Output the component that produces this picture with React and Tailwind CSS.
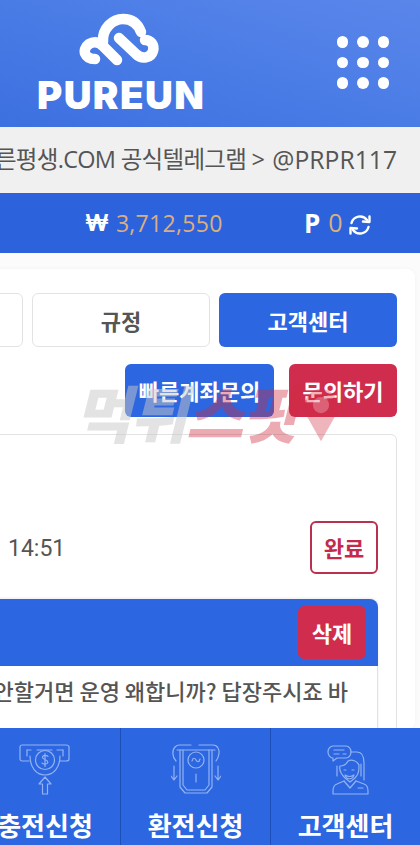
import React from 'react';

const kr = "font-['Noto_Sans_CJK_KR','Noto_Sans',sans-serif]";

const Logo = () => (
  <svg width="90" height="60" viewBox="80 10 90 60" fill="none" stroke="#fff" strokeWidth="10.5" strokeLinecap="round" strokeLinejoin="round" className="block">
    {/* left lobe */}
    <path d="M96 59 C86 59 82 50 90 44 C95 41 100 42 104 46 L118 60" />
    {/* top arc */}
    <path d="M104 42 C103 28 114 19 124 19 C133 19 139 24 142 32" />
    {/* inner strand with right lobe */}
    <path d="M120 38 L137 54 C143 60 152 58 154 51 C156 44 151 40 146 40" />
  </svg>
);

const RefreshIcon = () => (
  <svg width="24" height="24" viewBox="0 0 24 24" fill="none" stroke="#fff" strokeWidth="2.4" strokeLinecap="round" strokeLinejoin="round">
    <path d="M3.5 10 A8.8 8.8 0 0 1 19 7" />
    <path d="M20.5 14 A8.8 8.8 0 0 1 5 17" />
    <path d="M15 8.5 L21.5 9 L21.5 3.5" />
    <path d="M9 15.5 L2.5 15 L2.5 20.5" />
  </svg>
);

const ChargeIcon = () => (
  <svg width="52" height="52" viewBox="0 0 52 52" fill="none" stroke="#93b3f2" strokeWidth="1.2" strokeLinecap="round" strokeLinejoin="round">
    <path d="M10 17 H3 C2 17 1 16 1 15 V3 C1 2 2 1 3 1 H47 C49 1 50 2 50 3 V15 C50 16 49 17 47 17 H41" />
    <path d="M8 6 H12 M18 6 H33 M38 6 H44" />
    <path d="M8 6 V12 M44 6 V12" />
    <path d="M11 12 C11 23 17 31 26 31 C35 31 41 23 41 12" />
    <circle cx="26" cy="16" r="9.5" />
    <path d="M29 12.5 C28 11 24 11 23.5 13 C23 16 29 15 28.8 18.5 C28.5 20.5 24 20.5 23 19 M26 9.5 V22.5" />
    <path d="M26 33 L20 40 H23.5 V50 H28.5 V40 H32 Z" />
  </svg>
);

const ExchangeIcon = () => (
  <svg width="50" height="52" viewBox="0 0 50 52" fill="none" stroke="#93b3f2" strokeWidth="1.2" strokeLinecap="round" strokeLinejoin="round">
    <path d="M5 17 C1 13 1 6 4 3 C5 2 6 1 8 1 H20 M28 1 H42 C44 1 46 2 47 4 C49 7 48 13 45 17" />
    <path d="M6 6 H44" />
    <path d="M9 6 V43 L14 49 H36 L41 43 V6" />
    <path d="M12 6 V41 L16 46 H34 L38 41 V6" />
    <circle cx="25" cy="16" r="8" />
    <path d="M21 17 C22 13 24 14 25 16 C26 18 28 19 29 15" />
    <path d="M25 30 V38" />
    <path d="M3 22 V35 M0 32 L3 36 L6 32" />
    <path d="M47 22 V35 M44 32 L47 36 L50 32" />
  </svg>
);

const AgentIcon = () => (
  <svg width="50" height="52" viewBox="0 0 50 52" fill="none" stroke="#93b3f2" strokeWidth="1.2" strokeLinecap="round" strokeLinejoin="round">
    <path d="M12 2 H25 C28 2 30 5 30 8 C30 11 28 14 25 14 H16 L12 17 V14 C9 14 7 11 7 8 C7 5 9 2 12 2 Z" />
    <path d="M13 6 H23 M13 10 H18 M22 10 H25" />
    <path d="M27 17 C31 15 36 17 38 21 C38 26 38 30 34 34 L29 38 L24 34 C20 30 18 26 19 22 C22 22 25 21 27 17 Z" />
    <path d="M30 8 H36 C41 8 43 13 43 19 V36 M16 22 V32 M40 20 V32" />
    <path d="M23 26 H25 M31 26 H33" />
    <path d="M24 31 C27 33 30 33 33 31 C32 36 25 36 24 31 Z" />
    <path d="M23 37 L16 40 C13 41 12 44 12 47 V50 H47 V47 C47 44 46 41 43 40 L35 37" />
    <path d="M23 37 L29 44 L35 37" />
    <path d="M37 44 H42" />
  </svg>
);

const Tab = ({ label, active }) => (
  <div className={`w-[178px] h-[54px] shrink-0 rounded-md flex items-center justify-center text-[22px] font-bold ${active ? 'bg-[#2c66e0] text-white' : 'bg-white border border-[#e5e2e2] text-[#555555]'}`}>
    {label}
  </div>
);

const NavItem = ({ icon, label, divider }) => (
  <div className={`flex flex-col items-center pt-[16px] ${divider ? 'border-l border-[#1d4fb8]' : ''}`}>
    <div className="h-[52px] flex items-center justify-center">{icon}</div>
    <div className="text-[26px] font-bold text-white leading-none mt-[16px]">{label}</div>
  </div>
);

export default function App() {
  return (
    <div className={`relative w-[420px] h-[845px] overflow-hidden bg-[#fbfbfb] ${kr}`}>
      {/* 상단 헤더 */}
      <div className="h-[127px] bg-gradient-to-tr from-[#3d70e0] via-[#4a7ce6] to-[#5a86ea] flex justify-between pl-[37px] pr-[31px]">
        <div className="flex flex-col items-start w-[170px]">
          <div className="self-center mt-[10px] h-[60px] ml-[4px]"><Logo /></div>
          <div className="font-['Inter',sans-serif] font-black text-[38.5px] leading-none text-white mt-[6px] tracking-[1.4px]">PUREUN</div>
        </div>
        <div className="grid grid-cols-3 gap-[9px] h-fit mt-[36px]">
          {[1, 2, 3, 4, 5, 6, 7, 8, 9].map((n) => (
            <span key={n} className="w-[11.5px] h-[11.5px] rounded-full bg-white" />
          ))}
        </div>
      </div>

      {/* 공지 */}
      <div className="h-[66px] bg-[#f0f0f0] flex items-center justify-end gap-[8px] pr-[23px] text-[23.5px] text-[#555555] whitespace-nowrap tracking-[-0.7px] font-['Open_Sans','Noto_Sans_CJK_KR',sans-serif]">
        <span>푸른평생.COM 공식텔레그램 &gt;</span>
        <span className="text-[24.7px] tracking-[0px]">@PRPR117</span>
      </div>

      {/* 보유금액 */}
      <div className="h-[60px] bg-[#2c63dc] flex items-center pl-[85px] text-[23px] whitespace-nowrap font-['Open_Sans','Noto_Sans_CJK_KR',sans-serif]">
        <span className="font-bold text-white text-[23px] font-['Inter',sans-serif] leading-none">₩</span>
        <span className="ml-[7px] text-[#dcae7e] w-[188px] tracking-[0.3px]">3,712,550</span>
        <span className="font-bold text-white text-[26px]">P</span>
        <span className="ml-[8px] text-[#dcae7e] text-[25px]">0</span>
        <span className="ml-[5px] mt-[3px] flex"><RefreshIcon /></span>
      </div>

      {/* 본문 */}
      <div className="mt-[16px] bg-white rounded-lg shadow-[0_0_4px_rgba(0,0,0,0.04)] -ml-[30px] w-[445px] h-[460px] pt-[24px]">
        <div className="flex justify-end gap-[9px] pr-[18px] overflow-hidden">
          <Tab />
          <Tab label="규정" />
          <Tab label="고객센터" active />
        </div>
        <div className="flex justify-end gap-[15px] pr-[18px] mt-[17px]">
          <div className="w-[149px] h-[53px] rounded-md bg-[#2c66e0] text-white text-[22px] font-bold flex items-center justify-center">빠른계좌문의</div>
          <div className="w-[108px] h-[53px] rounded-md bg-[#d02c4e] text-white text-[22px] font-bold flex items-center justify-center">문의하기</div>
        </div>

        {/* 문의 목록 */}
        <div className="mt-[17px] mr-[18px] border border-[#e2e2e2] rounded-md h-[320px] pt-[86px] pr-[18px]">
          <div className="flex items-center justify-between h-[53px] pl-[37px]">
            <span className="text-[23px] text-[#555555] font-['Roboto',sans-serif] mt-[3px]">14:51</span>
            <div className="w-[68px] h-[53px] rounded-md border-2 border-[#b8324f] bg-white text-[#c42a4c] text-[22px] font-bold flex items-center justify-center">완료</div>
          </div>
          <div className="mt-[25px] rounded-t-lg h-[160px] shadow-[0_-1px_3px_rgba(0,0,0,0.08)]">
            <div className="h-[67px] bg-[#2c66e0] rounded-t-lg flex justify-end items-center pr-[12px]">
              <div className="w-[68px] h-[53px] rounded-md bg-[#d02c4e] text-white text-[22px] font-bold flex items-center justify-center">삭제</div>
            </div>
            <div className="flex justify-end pr-[29px] pt-[8px] h-[93px] border-r border-[#e2e2e2] text-[22px] font-medium text-[#555555] whitespace-nowrap overflow-hidden">
              왜 안할거면 운영 왜합니까? 답장주시죠 바
            </div>
          </div>
        </div>
      </div>

      {/* 워터마크 */}
      <div className="absolute left-[74px] top-[378px] flex items-center text-[62px] leading-none font-black italic whitespace-nowrap tracking-[-1px] pointer-events-none">
        <span className="text-[#c8c8c8]/50">먹튀</span>
        <span className="text-[#d02c3e]/40">스팟</span>
        <svg width="38" height="58" viewBox="0 0 42 62" className="shrink-0 ml-[4px] mt-[8px]">
          <path d="M21 60 L4 30 C-2 18 8 2 21 2 C34 2 44 18 38 30 Z" fill="#d02c3e" fillOpacity="0.35" />
          <circle cx="21" cy="20" r="9" fill="#fff" fillOpacity="0.25" />
        </svg>
      </div>

      {/* 하단 메뉴 */}
      <div className="absolute left-[-30px] top-[728px] w-[450px] h-[117px] bg-[#2c66e0] grid grid-cols-3">
        <NavItem icon={<ChargeIcon />} label="충전신청" />
        <NavItem icon={<ExchangeIcon />} label="환전신청" divider />
        <NavItem icon={<AgentIcon />} label="고객센터" divider />
      </div>
    </div>
  );
}
